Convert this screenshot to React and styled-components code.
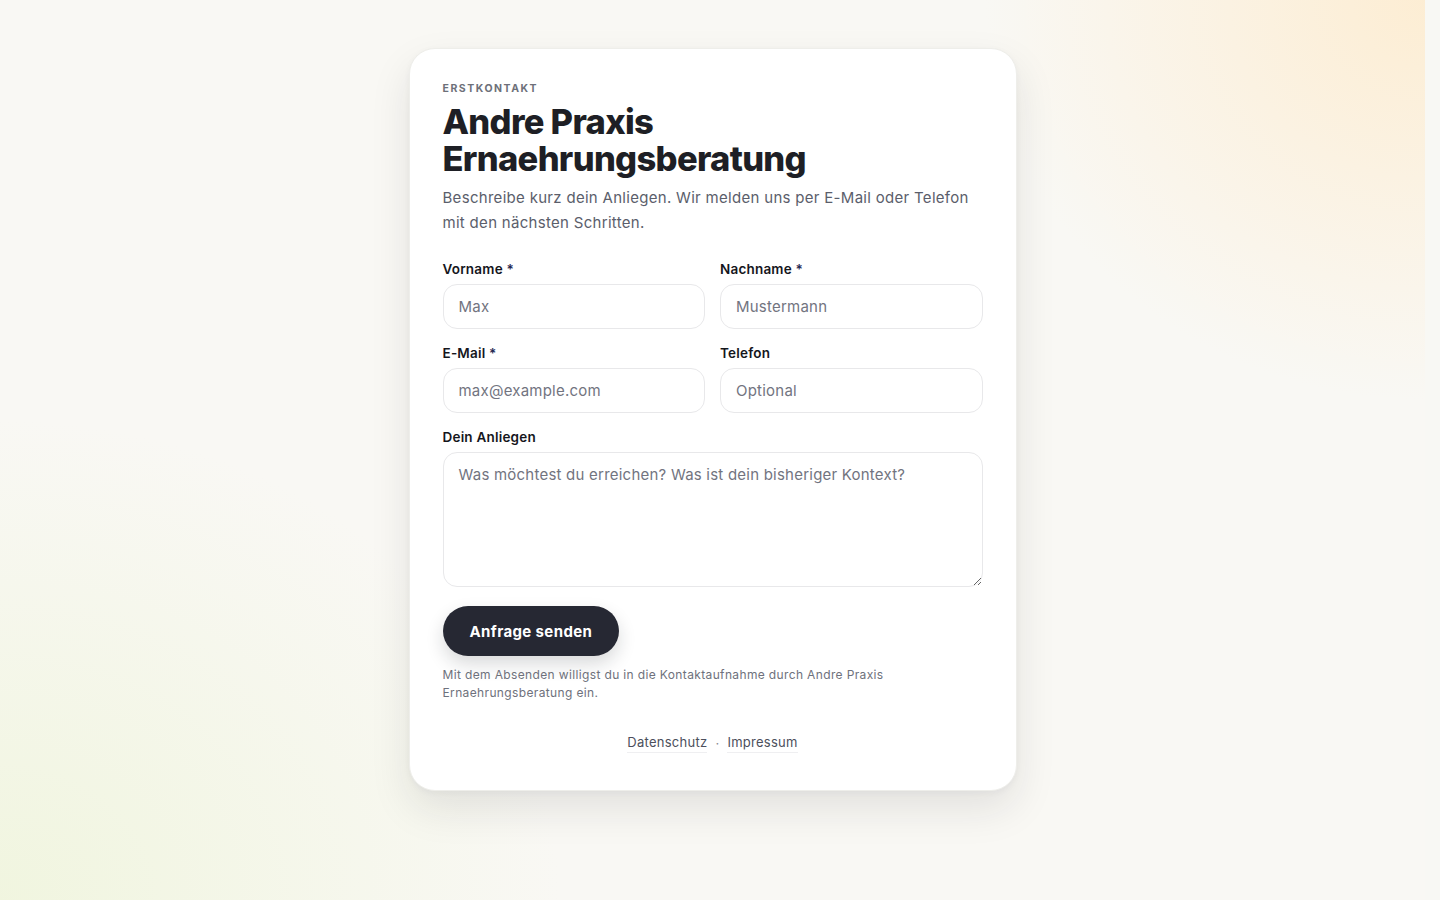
import React from "react";
import styled, { createGlobalStyle } from "styled-components";

const GlobalStyle = createGlobalStyle`
  *, *::before, *::after { box-sizing: border-box; }
  html, body { margin: 0; padding: 0; }
  body {
    font-family: Inter, "Noto Sans", "Liberation Sans", sans-serif;
    background: #f7f7f3;
    color: #1f2028;
  }
`;

const Shell = styled.div`
  display: flex;
  min-height: 100vh;
`;

const Page = styled.main`
  flex: 1;
  display: flex;
  justify-content: center;
  align-items: flex-start;
  padding: 48px 24px 48px;
  background:
    radial-gradient(ellipse 440px 400px at 100% 0%, rgba(253, 236, 208, 0.9), rgba(253, 236, 208, 0) 100%),
    radial-gradient(ellipse 560px 480px at 0% 100%, rgba(240, 245, 222, 0.95), rgba(240, 245, 222, 0) 100%),
    #f9f8f4;
`;

const Gutter = styled.div`
  width: 15px;
  flex: none;
  background: #f8f8f4;
`;

const Card = styled.section`
  width: 608px;
  background: #ffffff;
  border: 1px solid #eeeeea;
  border-radius: 26px;
  padding: 33px 33px 37px;
  box-shadow: 0 18px 40px rgba(30, 30, 40, 0.10), 0 2px 6px rgba(30, 30, 40, 0.04);
`;

const Eyebrow = styled.div`
  font-size: 10.5px;
  font-weight: 700;
  letter-spacing: 0.145em;
  text-transform: uppercase;
  color: #6d7079;
  line-height: 14px;
`;

const Title = styled.h1`
  margin: 7px 0 0;
  font-size: 34.5px;
  line-height: 37px;
  font-weight: 800;
  letter-spacing: -0.02em;
  color: #1e1f25;
`;

const Lead = styled.p`
  margin: 8px 0 0;
  font-size: 15px;
  line-height: 25px;
  letter-spacing: 0.02em;
  color: #5b5e6b;
  max-width: 535px;
`;

const Form = styled.form`
  margin-top: 25px;
  display: flex;
  flex-direction: column;
  gap: 15px;
`;

const Row = styled.div`
  display: grid;
  grid-template-columns: minmax(0, 1fr) minmax(0, 1fr);
  gap: 15px;
`;

const Field = styled.label`
  display: flex;
  flex-direction: column;
  gap: 6px;
  min-width: 0;
`;

const LabelText = styled.span`
  font-size: 13.5px;
  line-height: 18px;
  font-weight: 600;
  letter-spacing: 0.015em;
  color: #15161c;
`;

const Req = styled.span`
  color: #1d2550;
`;

const Input = styled.input`
  width: 100%;
  min-width: 0;
  height: 45px;
  border: 1px solid #e8e8ea;
  border-radius: 14px;
  padding: 0 15px;
  font-family: inherit;
  font-size: 15px;
  letter-spacing: 0.015em;
  color: #1f2028;
  background: #fff;
  outline: none;
  &::placeholder { color: #72747f; }
`;

const TextArea = styled.textarea`
  width: 100%;
  height: 135px;
  border: 1px solid #e8e8ea;
  border-radius: 14px;
  padding: 11px 15px;
  font-family: inherit;
  font-size: 15px;
  letter-spacing: 0.015em;
  line-height: 22px;
  color: #1f2028;
  background: #fff;
  outline: none;
  resize: vertical;
  &::placeholder { color: #72747f; }
`;

const Actions = styled.div`
  margin-top: 4px;
  display: flex;
  flex-direction: column;
  align-items: flex-start;
  gap: 10px;
`;

const Button = styled.button`
  height: 50px;
  padding: 0 27px;
  border: none;
  border-radius: 999px;
  background: #262833;
  color: #fff;
  font-family: inherit;
  font-size: 15px;
  font-weight: 700;
  letter-spacing: 0.025em;
  cursor: pointer;
  box-shadow: 0 8px 18px rgba(20, 22, 30, 0.16);
`;

const Consent = styled.p`
  margin: 0;
  font-size: 12px;
  line-height: 18px;
  letter-spacing: 0.03em;
  color: #6e717c;
  max-width: 470px;
`;

const Footer = styled.nav`
  margin-top: 30px;
  display: flex;
  justify-content: center;
  align-items: center;
  gap: 8px;
  font-size: 13px;
  line-height: 20px;
  letter-spacing: 0.02em;
  color: #8a8c94;
`;

const FooterLink = styled.a`
  color: #4c4f5c;
  text-decoration: none;
  border-bottom: 1px solid #efeff1;
`;

export default function App() {
  return (
    <>
      <GlobalStyle />
      <Shell>
        <Page>
          <Card>
            <Eyebrow>Erstkontakt</Eyebrow>
            <Title>
              Andre Praxis
              <br />
              Ernaehrungsberatung
            </Title>
            <Lead>
              Beschreibe kurz dein Anliegen. Wir melden uns per E-Mail oder Telefon mit den nächsten Schritten.
            </Lead>
            <Form onSubmit={(e) => e.preventDefault()}>
              <Row>
                <Field>
                  <LabelText>Vorname <Req>*</Req></LabelText>
                  <Input placeholder="Max" />
                </Field>
                <Field>
                  <LabelText>Nachname <Req>*</Req></LabelText>
                  <Input placeholder="Mustermann" />
                </Field>
              </Row>
              <Row>
                <Field>
                  <LabelText>E-Mail <Req>*</Req></LabelText>
                  <Input type="email" placeholder="max@example.com" />
                </Field>
                <Field>
                  <LabelText>Telefon</LabelText>
                  <Input placeholder="Optional" />
                </Field>
              </Row>
              <Field>
                <LabelText>Dein Anliegen</LabelText>
                <TextArea placeholder="Was möchtest du erreichen? Was ist dein bisheriger Kontext?" />
              </Field>
              <Actions>
                <Button type="submit">Anfrage senden</Button>
                <Consent>
                  Mit dem Absenden willigst du in die Kontaktaufnahme durch Andre Praxis Ernaehrungsberatung ein.
                </Consent>
              </Actions>
            </Form>
            <Footer>
              <FooterLink href="#">Datenschutz</FooterLink>
              <span>·</span>
              <FooterLink href="#">Impressum</FooterLink>
            </Footer>
          </Card>
        </Page>
        <Gutter />
      </Shell>
    </>
  );
}
